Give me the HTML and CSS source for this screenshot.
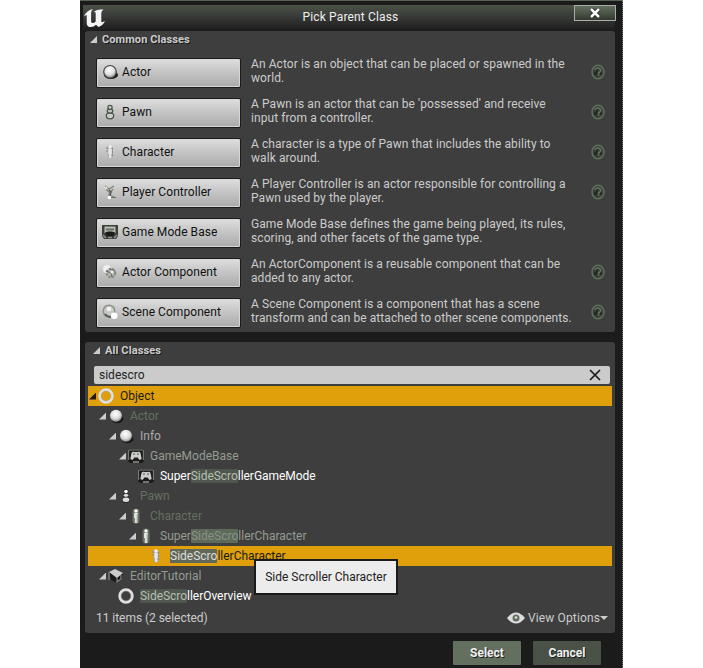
FILE: index.html
```html
<!DOCTYPE html>
<html lang="en">
<head>
<meta charset="utf-8">
<title>Pick Parent Class</title>
<link rel="stylesheet" href="styles.css">
</head>
<body>
<svg class="defs" width="0" height="0" aria-hidden="true">
  <defs>
    <radialGradient id="ball" cx=".45" cy=".35" r=".65"><stop offset="0" stop-color="#fff"/><stop offset=".6" stop-color="#ddd"/><stop offset="1" stop-color="#888"/></radialGradient>
    <symbol id="i-sphere" viewBox="0 0 16 16"><ellipse cx="9.5" cy="11" rx="6" ry="4.3" fill="#1b1b1b"/><circle cx="8" cy="7.8" r="6" fill="url(#ball)"/></symbol>
    <symbol id="i-sphere-dark" viewBox="0 0 16 16"><ellipse cx="9" cy="11" rx="7" ry="4" fill="#1b1b1b"/><circle cx="8" cy="7.8" r="6.3" fill="url(#ball)" stroke="#43473f" stroke-width="1.2"/></symbol>
    <symbol id="i-pawn" viewBox="0 0 16 16"><path d="M4 12q0-3 2-4-1-2 0-3Q5 1 8 1t2 4q1 1 0 3 2 1 2 4 0 3-4 3t-4-3z" fill="#263026"/><circle cx="8" cy="3.5" r="1.8" fill="#fff"/><ellipse cx="8" cy="7.3" rx="2.2" ry="1.5" fill="#ddd"/><ellipse cx="8" cy="11.7" rx="3.3" ry="2.2" fill="#ddd"/></symbol>
    <symbol id="i-pawn-light" viewBox="0 0 16 16"><g fill="#ccc" stroke="#4a5547" stroke-width="1.3"><ellipse cx="8" cy="11.8" rx="3.7" ry="3"/><ellipse cx="8" cy="7" rx="2.7" ry="2.1"/><circle cx="8" cy="3.4" r="2.1"/></g></symbol>
    <symbol id="i-person" viewBox="0 0 16 16"><rect x="4.4" y=".4" width="7.2" height="15.2" rx="3.4" fill="#64705f"/><circle cx="8" cy="3" r="1.7" fill="#fff"/><path d="M6 5h4v5H9.4v5H6.8v-5H6z" fill="#e1e1e1"/><path d="M9.3 6v8" stroke="#999"/></symbol>
    <symbol id="i-person-light" viewBox="0 0 16 16"><path d="M5 2l1 11 2 2 3-2V3z" fill="#aaa"/><circle cx="8" cy="3" r="1.7" fill="#f5f5f5"/><path d="M6.3 5h3.6v5h-.6v4H7v-4h-.7z" fill="#e6e6e6"/><path d="M10.4 4v8M5 3v6" stroke="#888" stroke-dasharray="2 1"/></symbol>
    <symbol id="i-controller" viewBox="0 0 16 16"><path d="M3 2l4 3 5-3M4 5l4 4 3-4M8 8l-1 3 5 2" fill="none" stroke="#7b8277" stroke-width="1.3"/><path d="M7 6l2 2-1 4" fill="none" stroke="#50584e" stroke-width="1.3"/><circle cx="4" cy="4" r="1.4" fill="#ddd"/><circle cx="7.5" cy="13.5" r="1.8" fill="#fff"/><path d="M9 13.5h5" stroke="#677063"/></symbol>
    <symbol id="i-gamemode" viewBox="0 0 16 16"><path fill="#1b1b1b" d="M0 1h16v12l-2 2H2l-2-2z"/><path d="M.6 12V2h14.800v10" fill="none" stroke="#7e887b"/><path d="M3.500 5q1-2 3-1h3q2-1 3 1l1.200 6-2.200 1-2-2.500h-3L4.500 12l-2.200-1z" fill="#ccc"/><path d="M5 6h2M9 6h2" stroke="#555"/><path d="M5 14h6" stroke="#8e988b" stroke-width="1.500"/></symbol>
    <symbol id="i-gamemode-light" viewBox="0 0 16 16"><path fill="#3a4238" d="M0 1h16v11l-2 3H2l-2-3z"/><path d="M2.500 2.500h11V9h-11z" fill="#b7bbb5"/><path d="M4 4.500h8v2H4z" fill="#6a7267"/><path d="M3 8.500l3-1h4l3 1-2 4H5z" fill="#1b1b1b"/><path d="M1 11l3 3M15 11l-3 3M6 13.500h4" stroke="#8b9588" stroke-width="1.500"/></symbol>
    <symbol id="i-gear" viewBox="0 0 16 16"><circle cx="5" cy="5" r="4" fill="#eee"/><circle cx="9" cy="9" r="4.200" fill="#bbb" stroke="#879083" stroke-width="2.300" stroke-dasharray="2.400 1"/><path d="M4 7l5 2 1 4M8 5l5 2" fill="none" stroke="#6c7568" stroke-width="1.200"/><circle cx="10" cy="8" r="1.500" fill="#eee"/></symbol>
    <symbol id="i-scene" viewBox="0 0 16 16"><circle cx="7" cy="7" r="5.800" fill="#c8c8c8" stroke="#8c9488" stroke-width="1.500"/><path d="M3 10q2 3 6 3" stroke="#566052" fill="none" stroke-width="2"/><circle cx="7" cy="5" r="2.300" fill="#f4f4f4"/><circle cx="12.200" cy="11.700" r="3.300" fill="#fff"/></symbol>
    <symbol id="i-ring" viewBox="0 0 16 16"><circle cx="8" cy="8" r="6.300" fill="none" stroke="#e1e1e1" stroke-width="2.800"/><circle cx="8" cy="8" r="4.900" fill="none" stroke="#999" stroke-width=".5"/></symbol>
    <symbol id="i-book" viewBox="0 0 16 16"><path d="M1 4l2 8 6 3 5-4 1-6z" fill="#1b1b1b"/><path d="M1 4l6-3 8 4-6 5z" fill="#ccc"/><path d="M1 4v8M9 10v4l4-3V7" fill="none" stroke="#858e82" stroke-width="1.200"/></symbol>
    <symbol id="i-help" viewBox="0 0 14 16"><ellipse cx="7" cy="8" rx="6" ry="6.800" fill="#3a3e38" stroke="#64705f" stroke-width="1.400"/><path d="M4.200 6q.3-2 2.800-2t2.800 2.200Q9.800 7.700 7.400 9v2.800" fill="none" stroke="#64705f" stroke-width="1.600"/><path d="M5.800 5.500v6M4 8v3M9.800 8.500v2" stroke="#161816"/></symbol>
  </defs>
</svg>

<main class="window">
  <header class="titlebar">
    <svg class="logo" viewBox="0 0 24 20"><path d="M1 8.500Q3 2.500 10 1 8 2.600 8.100 5v8.500q.2 1.700 2 1.500 1.600-.2 2.600-1.500V5.300q0-1.600-2-1.300Q13 1.500 17 1.500h3.500Q18.300 3 18.300 5v8.500q.3 1.500 3.700-.5-2 4.500-6.500 6l-2.500-2.300Q10.500 19.500 6.500 19 3.700 18 3.700 15V7.500Q3.700 6 1 8.500z" fill="#f5f5f5"/></svg>
    <h1 class="title">Pick Parent Class</h1>
    <button class="close" aria-label="Close"><svg viewBox="0 0 12 10"><path d="M2 1l8 8M10 1L2 9" stroke="#1b1b1b" stroke-width="4"/><path d="M2 1l8 8M10 1L2 9" stroke="#fff" stroke-width="2.500"/></svg></button>
  </header>

  <section class="panel common">
    <h2 class="heading"><i class="arrow"></i>Common Classes</h2>
    <ul class="classes">
      <li><button class="class"><svg><use href="#i-sphere-dark"/></svg>Actor</button><p>An Actor is an object that can be placed or spawned in the<br>world.</p><svg class="help"><use href="#i-help"/></svg></li>
      <li><button class="class"><svg><use href="#i-pawn-light"/></svg>Pawn</button><p>A Pawn is an actor that can be 'possessed' and receive<br>input from a controller.</p><svg class="help"><use href="#i-help"/></svg></li>
      <li><button class="class"><svg><use href="#i-person-light"/></svg>Character</button><p>A character is a type of Pawn that includes the ability to<br>walk around.</p><svg class="help"><use href="#i-help"/></svg></li>
      <li><button class="class"><svg><use href="#i-controller"/></svg>Player Controller</button><p>A Player Controller is an actor responsible for controlling a<br>Pawn used by the player.</p><svg class="help"><use href="#i-help"/></svg></li>
      <li><button class="class"><svg><use href="#i-gamemode-light"/></svg>Game Mode Base</button><p>Game Mode Base defines the game being played, its rules,<br>scoring, and other facets of the game type.</p></li>
      <li><button class="class"><svg><use href="#i-gear"/></svg>Actor Component</button><p>An ActorComponent is a reusable component that can be<br>added to any actor.</p><svg class="help"><use href="#i-help"/></svg></li>
      <li><button class="class"><svg><use href="#i-scene"/></svg>Scene Component</button><p>A Scene Component is a component that has a scene<br>transform and can be attached to other scene components.</p><svg class="help"><use href="#i-help"/></svg></li>
    </ul>
  </section>

  <section class="panel all">
    <h2 class="heading"><i class="arrow"></i>All Classes</h2>
    <div class="search"><span>sidescro</span><svg viewBox="0 0 12 12"><path d="M1 1l10 10M11 1L1 11" stroke="#1b1b1b" stroke-width="1.700"/></svg></div>
    <ul class="tree">
      <li class="row d0 selected"><i class="arrow dark"></i><svg><use href="#i-ring"/></svg><span>Object</span></li>
      <li class="row d1 faint"><i class="arrow"></i><svg><use href="#i-sphere"/></svg><span>Actor</span></li>
      <li class="row d2 dim"><i class="arrow"></i><svg><use href="#i-sphere"/></svg><span>Info</span></li>
      <li class="row d3 muted"><i class="arrow"></i><svg><use href="#i-gamemode"/></svg><span>GameModeBase</span></li>
      <li class="row d4 bright"><i class="arrow none"></i><svg><use href="#i-gamemode"/></svg><span>Super<mark>SideScro</mark>llerGameMode</span></li>
      <li class="row d2 faint"><i class="arrow"></i><svg><use href="#i-pawn"/></svg><span>Pawn</span></li>
      <li class="row d3 faint"><i class="arrow"></i><svg><use href="#i-person"/></svg><span>Character</span></li>
      <li class="row d4 muted"><i class="arrow"></i><svg><use href="#i-person"/></svg><span>Super<mark class="low">SideScro</mark>llerCharacter</span></li>
      <li class="row d5 selected"><i class="arrow none"></i><svg><use href="#i-person-light"/></svg><span class="anchor"><mark class="strong">SideScro</mark>llerCharacter<span class="tooltip">Side Scroller Character</span></span></li>
      <li class="row d1 muted"><i class="arrow"></i><svg><use href="#i-book"/></svg><span>EditorTutorial</span></li>
      <li class="row d2 bright"><i class="arrow none"></i><svg><use href="#i-ring"/></svg><span><mark>SideScro</mark>llerOverview</span></li>
    </ul>
    <div class="status">
      <span>11 items (2 selected)</span>
      <span class="view"><svg viewBox="0 0 18 12"><path d="M0 6q9-11 18 0-9 11-18 0z" fill="#ddd"/><circle cx="9" cy="6" r="3.500" fill="#64705f"/><circle cx="9" cy="5.500" r="1.300" fill="#ddd"/></svg><span>View Options</span><i class="caret"></i></span>
    </div>
  </section>

  <footer class="actions">
    <button class="action">Select</button>
    <button class="action cancel">Cancel</button>
  </footer>
</main>
</body>
</html>
```
FILE: styles.css
```css
* { box-sizing: border-box; }
body { margin: 0; background: #fff; font: 12px/14px Roboto, "Liberation Sans", sans-serif; color: #ccc; overflow: hidden; }
h1, h2, p, ul { margin: 0; padding: 0; font: inherit; }
li { list-style: none; }
button { font: inherit; border: 0; padding: 0; }
.defs { position: absolute; }

.window { width: 543px; height: 668px; margin-left: 80px; padding: 4px 7px 0 3px; background: #1b1b1b; border-top: 1px solid #596355; border-right: 1px dotted #758270; }

.titlebar { display: flex; align-items: flex-start; height: 26px; background: linear-gradient(#4b5348, #383a37 45%, #1b1b1b); }
.logo { width: 24px; height: 20px; margin: 3px 0 0; }
.title { flex: 1; padding: 5px 0 0 20px; text-align: center; color: #eee; letter-spacing: .15px; }
.close { display: flex; align-items: center; justify-content: center; width: 42px; height: 16px; margin: 0 -1px 0 0; border: 1px solid #a8aea5; background: linear-gradient(#64705f, #333930); }
.close svg { width: 12px; height: 10px; }

.panel { margin-left: 2px; width: 530px; background: #3e3e3e; border-radius: 3px; }
.common { height: 301px; }
.all { height: 291px; margin-top: 10px; padding: 0 3px; }

.heading { display: flex; align-items: center; height: 17px; padding-left: 5px; font-size: 11px; font-weight: 700; letter-spacing: .1px; text-shadow: 1px 1px #1b1b1b; }
.arrow { flex: none; width: 7px; height: 7px; margin-right: 5px; background: #ccc; clip-path: polygon(100% 0, 100% 100%, 0 100%); }
.arrow.dark { background: #1b1b1b; }
.arrow.none { visibility: hidden; }

.classes { padding: 5px 10px 0 11px; }
.classes li { display: flex; align-items: center; height: 40px; }
.class { display: flex; align-items: center; gap: 4px; width: 145px; height: 30px; padding: 0 0 2px 5px; border: 1px solid #1b1b1b; border-radius: 2px; background: linear-gradient(#dedede, #c8c8c8 40%, #aaa); box-shadow: inset 0 0 0 1px #d6d6d6; color: #111; letter-spacing: .06px; }
.class svg { width: 16px; height: 16px; }
.classes p { width: 340px; margin: -5px 0 0 10px; white-space: nowrap; letter-spacing: .08px; }
.help { width: 14px; height: 16px; margin-top: -3px; }

.search { display: flex; align-items: center; justify-content: space-between; height: 18px; margin: 7px 2px 2px 6px; padding: 0 9px 0 5px; border-radius: 2px; background: #cbcbcb; color: #222; }
.search svg { width: 12px; height: 12px; }

.tree { color: #ccc; }
.row { display: flex; align-items: center; height: 20px; }
.row .arrow { margin-right: 2px; }
.row > svg { flex: none; width: 16px; height: 16px; margin-right: 6px; }
.row > span { white-space: pre; }
.d0 { padding-left: 1px; }
.d1 { padding-left: 11px; }
.d2 { padding-left: 21px; }
.d3 { padding-left: 31px; }
.d4 { padding-left: 41px; }
.d5 { padding-left: 51px; }
.selected { background: #dfa00c; color: #1b1b1b; }
.faint { color: #64705f; }
.muted { color: #949b91; }
.dim { color: #aaa; }
.bright { color: #fff; letter-spacing: -.04px; }
mark { padding: 0; background: #4e574b; color: #b8beb5; border-radius: 1px; }
mark.low { background: #5d6959; color: #899286; }
mark.strong { background: #626858; color: #ddd; }

.anchor { position: relative; }
.tooltip { position: absolute; left: 84px; top: 10px; width: 144px; height: 36px; border: 2px solid #1b1b1b; background: #ececec; color: #222; line-height: 32px; text-align: center; }

.status { display: flex; justify-content: space-between; align-items: center; height: 24px; padding: 0 4px 0 8px; letter-spacing: -.04px; }
.view { display: flex; align-items: center; letter-spacing: .13px; }
.view svg { width: 18px; height: 12px; margin-right: 3px; }
.caret { width: 8px; height: 4px; background: #ccc; clip-path: polygon(0 0, 100% 0, 50% 100%); }

.actions { display: flex; justify-content: flex-end; gap: 12px; padding: 8px 14px 0 0; }
.action { width: 68px; height: 24px; border-radius: 1px; background: #64705f; color: #f0f0f0; font-weight: 700; text-shadow: 1px 1px #1b1b1b; }
.cancel { background: #4a5247; }
```
